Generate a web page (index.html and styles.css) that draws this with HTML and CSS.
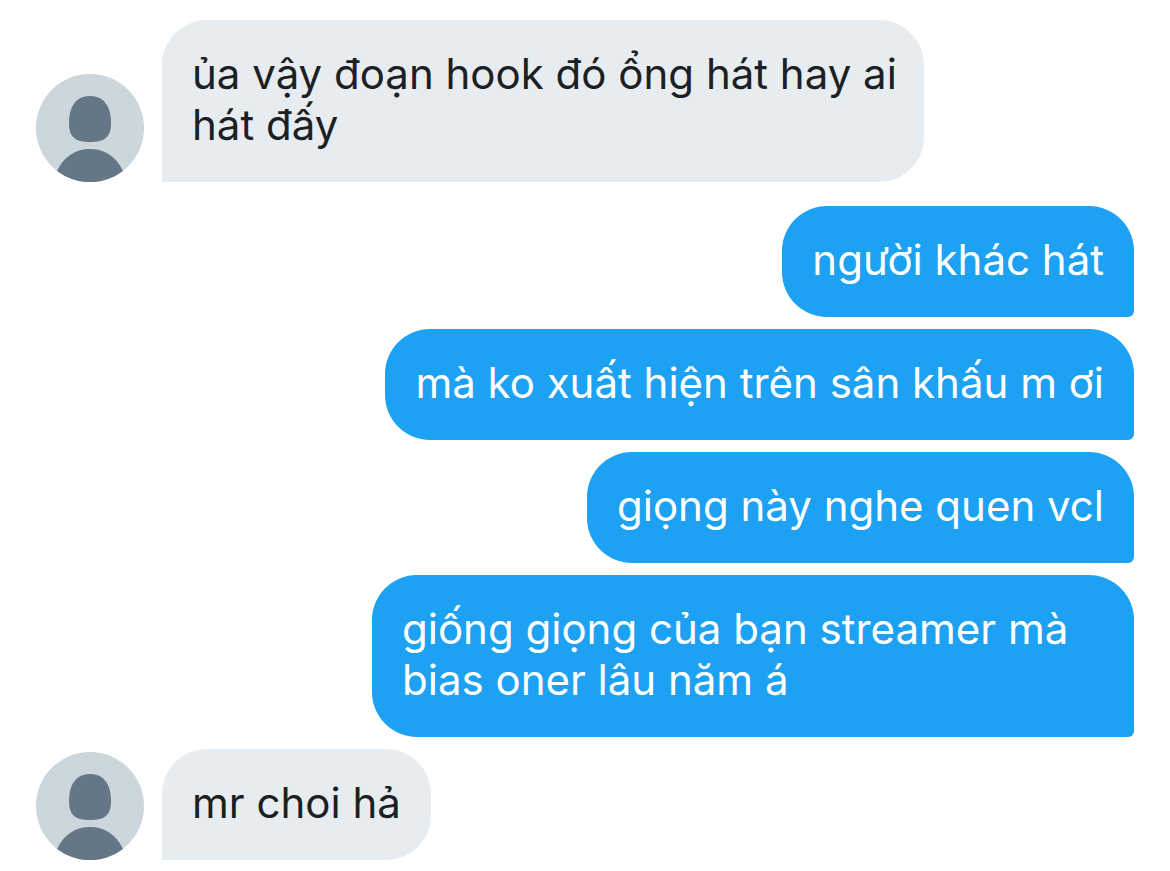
FILE: index.html
```html
<!DOCTYPE html>
<html lang="vi">
<head>
<meta charset="utf-8">
<meta name="viewport" content="width=device-width, initial-scale=1">
<title>Tin nhắn</title>
<link rel="stylesheet" href="styles.css">
</head>
<body>
<main class="chat">
  <section class="group received">
    <svg class="avatar" viewBox="0 0 108 108" aria-hidden="true">
      <circle class="avatar-bg" cx="54" cy="54" r="54"/>
      <path class="avatar-fg" d="M54 22C69 22 75 34 75 49C75 63 69 68 54 68S33 63 33 49C33 34 39 22 54 22Z"/>
      <path class="avatar-fg" d="M21 97C28 82 40 75 54 75S80 82 87 97A54 54 0 0 1 21 97Z"/>
    </svg>
    <p class="bubble multiline">ủa vậy đoạn hook đó ổng hát hay ai hát đấy</p>
  </section>
  <section class="group sent">
    <p class="bubble">người khác hát</p>
    <p class="bubble">mà ko xuất hiện trên sân khấu m ơi</p>
    <p class="bubble">giọng này nghe quen vcl</p>
    <p class="bubble multiline">giống giọng của bạn streamer mà bias oner lâu năm á</p>
  </section>
  <section class="group received">
    <svg class="avatar" viewBox="0 0 108 108" aria-hidden="true">
      <circle class="avatar-bg" cx="54" cy="54" r="54"/>
      <path class="avatar-fg" d="M54 22C69 22 75 34 75 49C75 63 69 68 54 68S33 63 33 49C33 34 39 22 54 22Z"/>
      <path class="avatar-fg" d="M21 97C28 82 40 75 54 75S80 82 87 97A54 54 0 0 1 21 97Z"/>
    </svg>
    <p class="bubble">mr choi hả</p>
  </section>
</main>
</body>
</html>
```
FILE: styles.css
```css
* {
  box-sizing: border-box;
}

body {
  margin: 0;
  background: #fff;
  font-family: Inter, "Noto Sans", sans-serif;
}

.chat {
  display: flex;
  flex-direction: column;
  padding: 20px 36px 11px;
}

.group {
  display: flex;
}

.received {
  align-items: flex-end;
  gap: 18px;
}

.sent {
  flex-direction: column;
  align-items: flex-end;
  gap: 12px;
  margin: 24px 0 12px;
}

.avatar {
  flex: none;
  width: 108px;
  height: 108px;
}

.avatar-bg {
  fill: #ccd6dd;
}

.avatar-fg {
  fill: #657786;
}

.bubble {
  max-width: 762px;
  margin: 0;
  padding: 28px 30px 32px;
  border-radius: 45px;
  font-size: 42px;
  line-height: 51px;
}

.multiline {
  padding-right: 20px;
}

.received .bubble {
  background: #e6ecf0;
  color: #1c2022;
  border-bottom-left-radius: 0;
}

.sent .bubble {
  background: #1da1f2;
  color: #fff;
  border-bottom-right-radius: 6px;
}
```
